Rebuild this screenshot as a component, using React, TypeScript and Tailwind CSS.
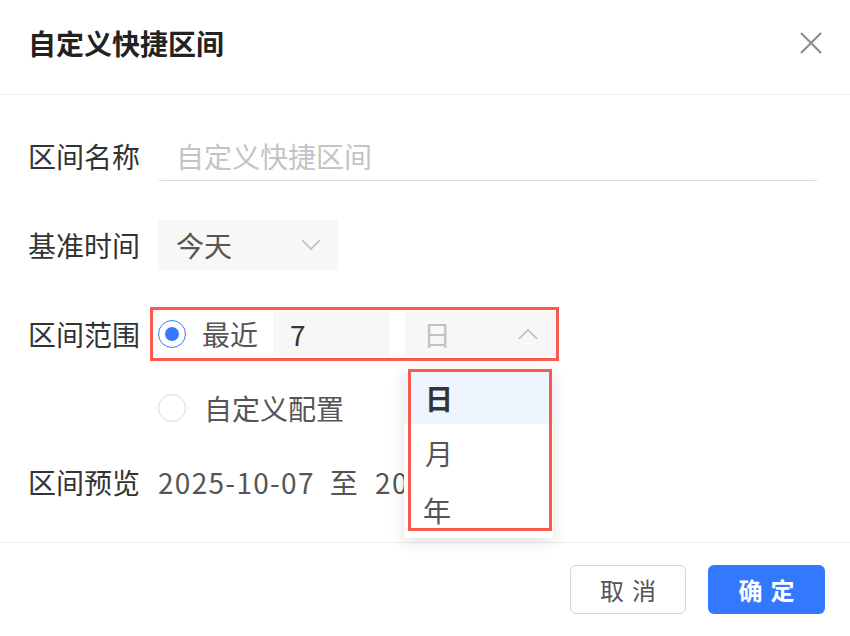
import React from "react";

const font = { fontFamily: '"Noto Sans CJK SC", "Noto Sans", sans-serif' };

function ChevronDown({ up = false }: { up?: boolean }) {
  return (
    <svg width="20" height="12" viewBox="0 0 20 12" fill="none">
      {up ? (
        <path d="M1 11 L10 2 L19 11" stroke="#bdbdbd" strokeWidth="1.6" />
      ) : (
        <path d="M1 1 L10 10 L19 1" stroke="#bdbdbd" strokeWidth="1.6" />
      )}
    </svg>
  );
}

export default function App() {
  return (
    <div
      className="relative w-[850px] h-[636px] bg-white overflow-hidden text-[#555]"
      style={font}
    >
      {/* Header */}
      <div className="h-[95px] flex items-center justify-between pl-[28px] pr-[26px] pb-[8px] border-b border-[#ececec]">
        <div className="text-[28px] font-semibold text-[#222] leading-none">
          自定义快捷区间
        </div>
        <svg width="24" height="24" viewBox="0 0 24 24" fill="none" className="mr-[1px]">
          <path d="M2 2 L22 22 M22 2 L2 22" stroke="#8a8a8a" strokeWidth="2" />
        </svg>
      </div>

      {/* Body */}
      <div className="pl-[28px] pr-[32px] pt-[36px] h-[448px] border-b border-[#ececec]">
        {/* Row 1 */}
        <div className="flex items-center h-[50px]">
          <div className="w-[130px] text-[28px] text-[#333] leading-none">区间名称</div>
          <div className="flex-1 h-[50px] flex items-center pl-[18px] border-b border-[#dedede] rounded-b-[3px] text-[28px] text-[#c4c4c4] leading-none">
            自定义快捷区间
          </div>
        </div>

        {/* Row 2 */}
        <div className="flex items-center mt-[39px] h-[50px]">
          <div className="w-[130px] text-[28px] text-[#333] leading-none">基准时间</div>
          <div className="w-[180px] h-[50px] bg-[#f7f7f7] flex items-center justify-between pl-[18px] pr-[17px]">
            <span className="text-[28px] text-[#555] leading-none">今天</span>
            <ChevronDown />
          </div>
        </div>

        {/* Row 3 */}
        <div className="flex items-center mt-[42px] h-[44px]">
          <div className="w-[130px] text-[28px] text-[#333] leading-none">区间范围</div>
          <div className="w-[28px] h-[28px] rounded-full border-[1.5px] border-[#3478ff] flex items-center justify-center">
            <div className="w-[14px] h-[14px] rounded-full bg-[#3478ff]" />
          </div>
          <span className="ml-[16px] text-[28px] text-[#555] leading-none">最近</span>
          <div className="ml-[15px] w-[117px] h-[44px] bg-[#f7f7f7] flex items-center pl-[17px] text-[28px] text-[#333] leading-none">
            7
          </div>
          <div className="ml-[15px] w-[150px] h-[44px] bg-[#f7f7f7] flex items-center justify-between pl-[18px] pr-[17px]">
            <span className="text-[28px] text-[#c2c2c2] leading-none">日</span>
            <ChevronDown up />
          </div>
        </div>

        {/* Row 4 */}
        <div className="flex items-center mt-[30px] h-[44px]">
          <div className="w-[130px]" />
          <div className="w-[28px] h-[28px] rounded-full border-[1.5px] border-[#d9d9d9]" />
          <span className="ml-[18px] text-[28px] text-[#555] leading-none">自定义配置</span>
        </div>

        {/* Row 5 */}
        <div className="flex items-center mt-[30px] h-[44px] whitespace-nowrap">
          <div className="w-[130px] text-[28px] text-[#333] leading-none">区间预览</div>
          <span className="text-[28px] text-[#555] leading-none tracking-[1.3px]">
            2025-10-07<span className="ml-[15px] mr-[16px]">至</span>2025-10-13
          </span>
        </div>
      </div>

      {/* Footer */}
      <div className="flex justify-end items-center gap-[22px] pr-[25px] pt-[22px]">
        <button className="w-[116px] h-[49px] rounded-[6px] border border-[#d6d6d6] bg-white flex items-center justify-center gap-[8px] text-[24px] text-[#555] leading-none">
          <span>取</span>
          <span>消</span>
        </button>
        <button className="w-[117px] h-[49px] rounded-[6px] bg-[#3478ff] flex items-center justify-center gap-[8px] text-[24px] font-semibold text-white leading-none">
          <span>确</span>
          <span>定</span>
        </button>
      </div>

      {/* Dropdown menu */}
      <div className="absolute left-[404px] top-[368px] w-[149px] h-[170px] bg-white rounded-[4px] shadow-[0_4px_16px_rgba(0,0,0,0.12)] pt-[4px]">
        <div className="h-[52px] bg-[#eef5fe] flex items-center pl-[21px] text-[28px] font-semibold text-[#333] leading-none">
          日
        </div>
        <div className="h-[58px] flex items-center pl-[21px] text-[28px] text-[#555] leading-none">
          月
        </div>
        <div className="h-[56px] flex items-center pl-[19px] text-[28px] text-[#555] leading-none">
          年
        </div>
      </div>

      {/* Annotation boxes */}
      <div className="absolute left-[150px] top-[307px] w-[409px] h-[54px] border-[3px] border-[#fa5a4b] pointer-events-none" />
      <div className="absolute left-[408px] top-[369px] w-[144px] h-[162px] border-[3px] border-[#fa5a4b] pointer-events-none" />
    </div>
  );
}
